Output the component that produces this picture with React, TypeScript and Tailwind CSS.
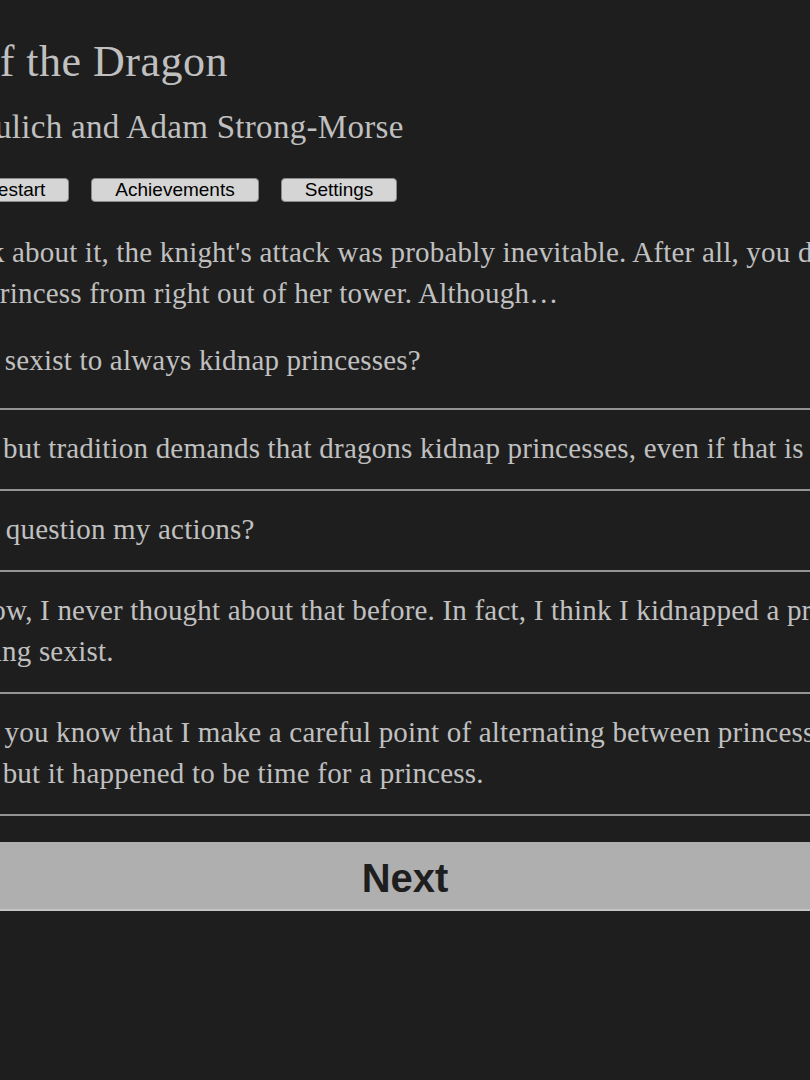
const serif = { fontFamily: '"Liberation Serif", "DejaVu Serif", serif' };

const options = [
  ['O, but tradition demands that dragons kidnap princesses, even if that is sexist.'],
  ['Ye question my actions?'],
  [
    "Wow, I never thought about that before. In fact, I think I kidnapped a princess last time. Maybe I've been",
    'being sexist.'
  ],
  [
    'So you know that I make a careful point of alternating between princesses and princes',
    '— but it happened to be time for a princess.'
  ]
];

export default function App() {
  return (
    <div className="min-h-screen overflow-hidden bg-[#1e1e1e] text-[#c0c0c0]">
      <div className="-ml-[170px] w-[1150px]">
        <div className="pl-[8px] pt-[38px]" style={serif}>
          <h1 className="text-[44px] leading-[48px] tracking-[0.5px]">Choice of the Dragon</h1>
          <h2 className="mt-[21px] text-[33px] leading-[41px] tracking-[0.3px]">by Dan Fabulich and Adam Strong-Morse</h2>
        </div>

        <div className="mt-[30px] flex gap-[22px] font-['Liberation_Sans',sans-serif] text-[19px] leading-[22px] text-black">
          <button className="ml-[-36px] h-[24px] rounded-[4px] border border-[#8a8a8a] bg-[#d5d5d5] px-[23px]">Show Stats</button>
          <button className="h-[24px] rounded-[4px] border border-[#8a8a8a] bg-[#d5d5d5] px-[23px]">Restart</button>
          <button className="h-[24px] rounded-[4px] border border-[#8a8a8a] bg-[#d5d5d5] px-[23px]">Achievements</button>
          <button className="h-[24px] rounded-[4px] border border-[#8a8a8a] bg-[#d5d5d5] px-[23px]">Settings</button>
        </div>

        <div className="text-[29px] leading-[41px] tracking-[0.2px]" style={serif}>
          <div className="pl-[6px]">
            <p className="mt-[30px] whitespace-nowrap">
              Come to think about it, the knight's attack was probably inevitable. After all, you did
              <br />
              kidnap their princess from right out of her tower. Although…
            </p>
            <p className="mt-[26px] whitespace-nowrap">Isn't it simply sexist to always kidnap princesses?</p>
          </div>

          <div className="mt-[27px] border-t-2 border-[#949494]">
            {options.map((lines, i) => (
              <label key={i} className="flex items-start gap-[20px] border-b-2 border-[#949494] pb-[20px] pt-[18px] pl-[103px]">
                <input type="radio" name="choice" className="mt-[14px] h-[14px] w-[14px]" />
                <span className="whitespace-nowrap">
                  {lines.map((line, j) => (
                    <span key={j} className="block">{line}</span>
                  ))}
                </span>
              </label>
            ))}
          </div>
        </div>

        <button className="mt-[26px] h-[69px] w-full border-b-2 border-[#c4c4c4] bg-[#afafaf] pt-[4px] font-['Liberation_Sans',sans-serif] text-[40px] font-bold text-[#1e1e1e]">
          Next
        </button>
      </div>
    </div>
  );
}
